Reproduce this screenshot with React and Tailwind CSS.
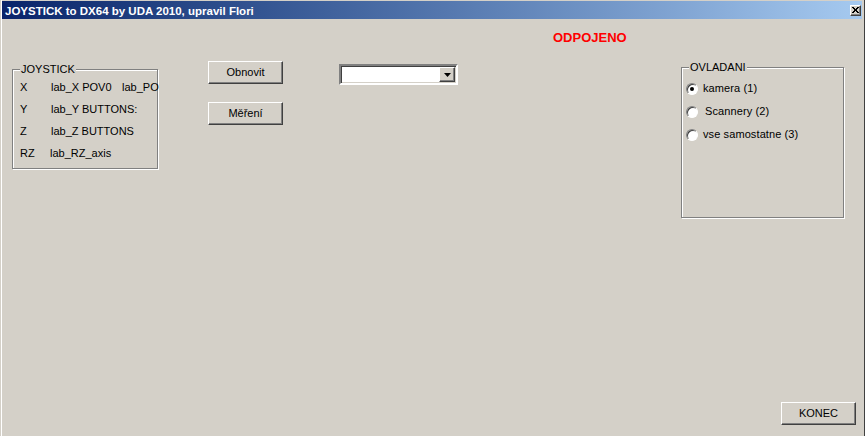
import React from "react";

const raised =
  "border border-t-white border-l-white border-r-[#404040] border-b-[#404040] shadow-[inset_-1px_-1px_0_#808080]";

const GroupBox = ({ label, className, children }) => (
  <div
    className={`relative border border-[#808080] shadow-[inset_1px_1px_0_#fff,1px_1px_0_#fff] ${className}`}
  >
    <span className="absolute -top-[8px] left-[7px] bg-[#d4d0c8] px-px leading-[14px] z-10">{label}</span>
    {children}
  </div>
);

const Button = ({ children, className = "" }) => (
  <button className={`w-[75px] h-[23px] bg-[#d4d0c8] text-[11px] leading-none ${raised} ${className}`}>
    {children}
  </button>
);

const Radio = ({ checked, label, gap = "ml-[5px]" }) => (
  <label className="flex items-center h-[23px]">
    <span className="w-[12px] h-[12px] rounded-full bg-white border border-t-[#808080] border-l-[#808080] border-r-white border-b-white shadow-[inset_1px_1px_0_#404040] flex items-center justify-center">
      {checked && <span className="w-[4px] h-[4px] rounded-full bg-black" />}
    </span>
    <span className={gap}>{label}</span>
  </label>
);

const joyRows = [
  { axis: "X", w: "w-[31px]", text: "lab_X POV0", extra: "lab_PO" },
  { axis: "Y", w: "w-[31px]", text: "lab_Y BUTTONS:" },
  { axis: "Z", w: "w-[31px]", text: "lab_Z BUTTONS" },
  { axis: "RZ", w: "w-[30px]", text: "lab_RZ_axis" },
];

export default function App() {
  return (
    <div
      className="w-[865px] h-[436px] bg-[#d4d0c8] pl-[2px] pr-[3px] pt-px flex flex-col overflow-hidden shadow-[inset_-1px_0_0_#404040,inset_1px_0_0_#d4d0c8,inset_2px_0_0_#fff] text-black text-[11px]"
      style={{ fontFamily: '"Liberation Sans", Arial, sans-serif' }}
    >
      {/* title bar */}
      <div className="h-[18px] flex items-center justify-between bg-gradient-to-r from-[#0a246a] to-[#a6caf0] pl-[3px] pr-px">
        <span className="text-white font-bold text-[11.5px] leading-[18px] pt-px whitespace-nowrap">
          JOYSTICK to DX64 by UDA 2010, upravil Flori
        </span>
        <span className={`w-[11px] h-[11px] bg-[#d4d0c8] flex items-center justify-center ${raised}`}>
          <svg width="7" height="6" viewBox="0 0 7 6">
            <path d="M0 0L6 6M1 0L7 6M6 0L0 6M7 0L1 6" stroke="#000" strokeWidth="1" />
          </svg>
        </span>
      </div>

      {/* client area */}
      <div className="flex-1 flex flex-col">
        <div className="mt-[11px] ml-[551px] text-[#ff0000] font-bold text-[13px] leading-[15px]">ODPOJENO</div>

        <div className="flex items-start mt-[16px]">
          <GroupBox label="JOYSTICK" className="ml-[10px] mt-[8px] w-[146px] h-[100px]">
            <div className="w-full h-full pl-[7px] pt-[6px]">
              {joyRows.map((r) => (
                <div key={r.axis} className="flex h-[22px] leading-[22px] whitespace-nowrap">
                  <span className={`${r.w} shrink-0`}>{r.axis}</span>
                  <span className={r.extra ? "w-[71px] shrink-0" : ""}>{r.text}</span>
                  {r.extra && <span>{r.extra}</span>}
                </div>
              ))}
            </div>
          </GroupBox>

          <div className="ml-[50px] flex flex-col gap-[18px]">
            <Button>Obnovit</Button>
            <Button>Měření</Button>
          </div>

          <div className="ml-[56px] mt-[3px] w-[119px] h-[21px] bg-white border-2 border-t-[#808080] border-l-[#808080] border-r-white border-b-white shadow-[inset_1px_1px_0_#404040,inset_-1px_-1px_0_#d4d0c8] flex justify-end p-px">
            <span className={`w-[16px] h-full bg-[#d4d0c8] flex items-center justify-center ${raised}`}>
              <svg width="7" height="4" viewBox="0 0 7 4">
                <path d="M0 0H7L3.5 4Z" fill="#000" />
              </svg>
            </span>
          </div>

          <GroupBox label="OVLADANI" className="ml-[223px] mt-[6px] w-[163px] h-[151px]">
            <div className="pl-[4px] pt-[9px] flex flex-col tracking-[0.1px]">
              <Radio checked label="kamera (1)" />
              <Radio label="Scannery (2)" gap="ml-[7px]" />
              <Radio label="vse samostatne (3)" />
            </div>
          </GroupBox>
        </div>

        <div className="mt-auto mb-[11px] flex justify-end mr-[6px]">
          <Button>KONEC</Button>
        </div>
      </div>
    </div>
  );
}
